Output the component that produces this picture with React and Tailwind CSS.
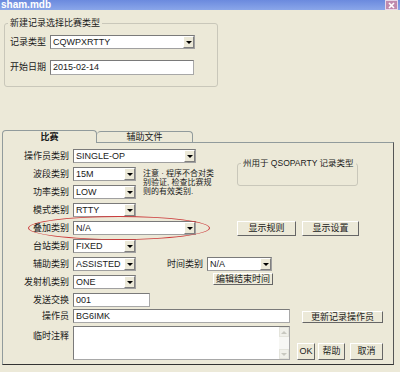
import React from "react";

const FONT = "font-['Liberation_Sans','Noto_Sans_CJK_SC',sans-serif]";

function Arrow() {
  return (
    <span className="flex h-full w-[11px] items-center justify-center border border-t-white border-l-white border-r-[#808080] border-b-[#808080] bg-[#ece9d8]">
      <span className="h-0 w-0 border-l-[3px] border-r-[3px] border-t-[3px] border-l-transparent border-r-transparent border-t-black" />
    </span>
  );
}

function Combo({ w, children }) {
  return (
    <div className={`flex h-[14px] items-stretch border border-[#a0a0a0] border-t-[#7a7a7a] border-l-[#7a7a7a] bg-white ${w}`}>
      <span className="flex-1 overflow-hidden pl-[2px] text-[9px] leading-[12px] whitespace-nowrap">{children}</span>
      <Arrow />
    </div>
  );
}

function Field({ w, h = "h-[14px]", children }) {
  return (
    <div className={`border border-[#a8a8a8] border-t-[#7a7a7a] border-l-[#7a7a7a] bg-white pl-[2px] text-[9px] leading-[12px] ${w} ${h}`}>
      {children}
    </div>
  );
}

function Btn({ w, h = "h-[15px]", children }) {
  return (
    <div className={`flex items-center justify-center border border-t-white border-l-white border-r-[#666] border-b-[#666] bg-[#ece9d8] text-[9px] leading-none whitespace-nowrap ${w} ${h}`}>
      {children}
    </div>
  );
}

function Label({ children }) {
  return <span className="w-[66px] shrink-0 text-right text-[9px] leading-[9px] whitespace-nowrap">{children}</span>;
}

function Row({ label, children }) {
  return (
    <div className="flex h-[18px] items-center">
      <Label>{label}</Label>
      <div className="ml-[4px] flex items-center">{children}</div>
    </div>
  );
}

export default function App() {
  return (
    <div className={`relative h-[372px] w-[400px] overflow-hidden bg-[#ece9d8] text-[#1a1a1a] ${FONT}`}>
      {/* title bar */}
      <div className="flex h-[10px] items-start justify-between overflow-hidden bg-linear-to-b from-[#6b8ade] to-[#8aa6e9]">
        <span className="pl-[1px] text-[10px] leading-[9px] font-bold text-white">sham.mdb</span>
        <span className="mr-[2px] flex h-[10px] w-[13px] items-center justify-center border border-[#e8d8e8] bg-[#c08aae]">
          <svg width="7" height="7" viewBox="0 0 7 7">
            <path d="M1 1 L6 6 M6 1 L1 6" stroke="white" strokeWidth="1.6" />
          </svg>
        </span>
      </div>

      {/* top group */}
      <fieldset className="mt-[8px] ml-[4px] h-[69px] w-[214px] rounded-[3px] border border-[#c9c7ba]">
        <legend className="ml-[3px] px-[2px] text-[9px] leading-[10px] whitespace-nowrap">新建记录选择比赛类型</legend>
        <div className="mt-[7px] flex h-[14px] items-center pl-[5px]">
          <span className="w-[40px] text-[9px] leading-[9px]">记录类型</span>
          <Combo w="w-[145px]">CQWPXRTTY</Combo>
        </div>
        <div className="mt-[11px] flex h-[15px] items-center pl-[5px]">
          <span className="w-[40px] text-[9px] leading-[9px]">开始日期</span>
          <Field w="w-[144px]" h="h-[15px]">2015-02-14</Field>
        </div>
      </fieldset>

      {/* tabs */}
      <div className="relative z-10 mt-[43px] -mb-px flex h-[13px] items-end pl-[2px]">
        <div className="flex h-[13px] w-[95px] items-center justify-center rounded-t-[4px] border border-b-0 border-[#919b9c] bg-[#ece9d8] text-[9px] leading-none font-bold">
          比赛
        </div>
        <div className="flex h-[12px] w-[96px] items-center justify-center rounded-t-[4px] border border-b-0 border-l-0 border-[#919b9c] text-[9px] leading-none">
          辅助文件
        </div>
      </div>

      {/* panel */}
      <div className="ml-[2px] h-[223px] w-[392px] border border-[#919b9c] border-r-[#555] border-b-[#333] pt-[4px]">
        <Row label="操作员类别">
          <Combo w="w-[123px]">SINGLE-OP</Combo>
        </Row>

        <div className="flex">
          <div className="flex flex-col">
            <Row label="波段类别">
              <Combo w="w-[63px]">15M</Combo>
            </Row>
            <Row label="功率类别">
              <Combo w="w-[63px]">LOW</Combo>
            </Row>
            <Row label="模式类别">
              <Combo w="w-[63px]">RTTY</Combo>
            </Row>
          </div>
          <div className="ml-[7px] w-[86px] pt-[4px] text-[8px] leading-[9px] whitespace-nowrap">
            注意 · 程序不合对类
            <br />
            别验证, 检查比赛规
            <br />
            则的有效类别.
          </div>
          <fieldset className="-mt-[7px] ml-[8px] h-[28px] w-[121px] min-w-0 rounded-[3px] border border-[#c9c7ba]">
            <legend className="ml-[3px] px-[2px] text-[8.5px] leading-[10px] whitespace-nowrap">州用于 QSOPARTY 记录类型</legend>
          </fieldset>
        </div>

        <Row label="叠加类别">
          <Combo w="w-[123px]">N/A</Combo>
          <div className="ml-[41px]">
            <Btn w="w-[59px]">显示规则</Btn>
          </div>
          <div className="ml-[6px]">
            <Btn w="w-[57px]">显示设置</Btn>
          </div>
        </Row>
        <Row label="台站类别">
          <Combo w="w-[63px]">FIXED</Combo>
        </Row>
        <Row label="辅助类别">
          <Combo w="w-[63px]">ASSISTED</Combo>
          <span className="ml-[31px] w-[36px] text-[9px] leading-[9px] whitespace-nowrap">时间类别</span>
          <div className="ml-[4px]">
            <Combo w="w-[65px]">N/A</Combo>
          </div>
        </Row>
        <div className="flex h-[18px] items-center">
          <Label>发射机类别</Label>
          <div className="ml-[4px]">
            <Combo w="w-[63px]">ONE</Combo>
          </div>
          <div className="ml-[77px] self-start">
            <Btn w="w-[60px]" h="h-[12px]">编辑结束时间</Btn>
          </div>
        </div>

        <div className="mt-[2px] flex h-[14px] items-center">
          <Label>发送交换</Label>
          <div className="ml-[4px]">
            <Field w="w-[77px]">001</Field>
          </div>
        </div>
        <div className="mt-[2px] flex h-[14px] items-center">
          <Label>操作员</Label>
          <div className="ml-[4px]">
            <Field w="w-[217px]">BG6IMK</Field>
          </div>
          <div className="ml-[12px] self-end">
            <Btn w="w-[81px]" h="h-[12px]">更新记录操作员</Btn>
          </div>
        </div>
        <div className="mt-[3px] flex h-[34px] items-start">
          <span className="w-[66px] shrink-0 pt-[6px] text-right text-[9px] leading-[9px]">临时注释</span>
          <div className="ml-[4px] flex h-[34px] w-[217px] border border-[#a8a8a8] border-t-[#7a7a7a] border-l-[#7a7a7a] bg-white">
            <div className="flex-1" />
            <div className="flex w-[10px] flex-col justify-between bg-[#f7f7f4]">
              <span className="flex h-[10px] items-center justify-center border border-[#e4e4dc] bg-[#f0f0ea]">
                <span className="h-0 w-0 border-l-[3px] border-r-[3px] border-b-[3px] border-l-transparent border-r-transparent border-b-[#c8c8c0]" />
              </span>
              <span className="flex h-[10px] items-center justify-center border border-[#e4e4dc] bg-[#f0f0ea]">
                <span className="h-0 w-0 border-l-[3px] border-r-[3px] border-t-[3px] border-l-transparent border-r-transparent border-t-[#c8c8c0]" />
              </span>
            </div>
          </div>
          <div className="ml-[7px] flex items-end self-end">
            <Btn w="w-[18px]" h="h-[17px]">OK</Btn>
            <div className="ml-[3px]">
              <Btn w="w-[27px]" h="h-[17px]">帮助</Btn>
            </div>
            <div className="ml-[5px]">
              <Btn w="w-[33px]" h="h-[17px]">取消</Btn>
            </div>
          </div>
        </div>
      </div>

      {/* annotation */}
      <div className="absolute left-[28px] top-[216px] h-[24px] w-[182px] rounded-[50%] border border-[#cc3b3b]" />
    </div>
  );
}
